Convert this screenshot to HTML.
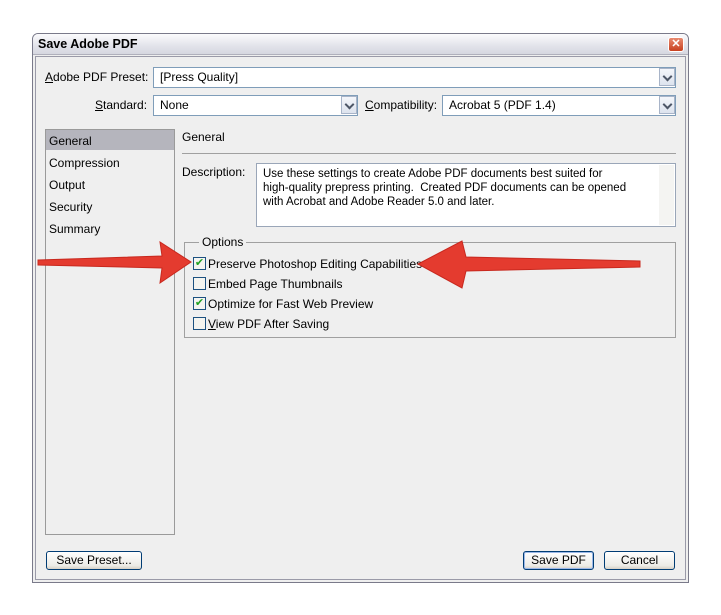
<!DOCTYPE html>
<html><head><style>
*{margin:0;padding:0;box-sizing:border-box}
body{width:721px;height:615px;background:#fff;position:relative;overflow:hidden;font-family:"Liberation Sans",sans-serif;font-size:12px;color:#000}
.a{position:absolute;white-space:nowrap}
.win{left:32px;top:33px;width:657px;height:550px;border:1px solid #7a7a8a;border-radius:6px 6px 0 0;background:#efefef}
.tb{left:33px;top:34px;width:655px;height:21px;border-radius:5px 5px 0 0;background:linear-gradient(#fbfbfd,#e2e3ea 60%,#d6d7e0);border-bottom:1px solid #b0b0bc}
.inner{left:35px;top:56px;width:651px;height:524px;border:1px solid #9a9aa8}
.box{background:#fff;border:1px solid #7f9db9}
.dd{width:16px;height:18px;border:1px solid #a8b4c8;background:linear-gradient(#f4f6fa,#dde3ee);}
.dd:after{content:"";position:absolute;left:4px;top:4px;width:5px;height:5px;border-right:2px solid #4d5666;border-bottom:2px solid #4d5666;transform:rotate(45deg)}
.cb{width:13px;height:13px;border:1px solid #1c5180;background:#f4f4f0}
.btn{height:19px;border:1px solid #003c74;border-radius:3px;background:linear-gradient(#fff,#ecebe6 80%,#d6d0c5);text-align:center;line-height:16px}
u{text-decoration:underline}
</style></head><body>
<div class="a win"></div>
<div class="a tb"></div>
<div class="a" style="left:38px;top:37px;font-weight:bold;font-size:12.5px">Save Adobe PDF</div>
<div class="a" style="left:668px;top:37px;width:16px;height:15px;border:1px solid #fff;border-radius:3px;background:linear-gradient(#e88a70,#c8401f);color:#fff;font-size:11px;font-weight:bold;text-align:center;line-height:13px">✕</div>
<div class="a inner"></div>

<div class="a" style="left:45px;top:70px"><u>A</u>dobe PDF Preset:</div>
<div class="a box" style="left:153px;top:67px;width:523px;height:21px;padding:2px 6px">[Press Quality]</div>
<div class="a dd" style="left:659px;top:68px"></div>

<div class="a" style="left:95px;top:98px"><u>S</u>tandard:</div>
<div class="a box" style="left:153px;top:95px;width:205px;height:21px;padding:2px 6px">None</div>
<div class="a dd" style="left:341px;top:96px"></div>
<div class="a" style="left:365px;top:98px"><u>C</u>ompatibility:</div>
<div class="a box" style="left:442px;top:95px;width:234px;height:21px;padding:2px 6px">Acrobat 5 (PDF 1.4)</div>
<div class="a dd" style="left:659px;top:96px"></div>

<div class="a" style="left:45px;top:129px;width:130px;height:406px;border:1px solid #9a9a9a;background:#efefef"></div>
<div class="a" style="left:46px;top:130px;width:128px;height:20px;background:#b5b5bd"></div>
<div class="a" style="left:49px;top:134px">General</div>
<div class="a" style="left:49px;top:156px">Compression</div>
<div class="a" style="left:49px;top:178px">Output</div>
<div class="a" style="left:49px;top:200px">Security</div>
<div class="a" style="left:49px;top:222px">Summary</div>

<div class="a" style="left:182px;top:130px">General</div>
<div class="a" style="left:182px;top:153px;width:494px;height:1px;background:#a0a0a0"></div>
<div class="a" style="left:182px;top:165px">Description:</div>
<div class="a box" style="left:256px;top:163px;width:420px;height:64px;border-color:#9aa6b8;padding:3px 6px;line-height:14px;font-size:11.5px">Use these settings to create Adobe PDF documents best suited for<br>high-quality prepress printing.&nbsp; Created PDF documents can be opened<br>with Acrobat and Adobe Reader 5.0 and later.</div>
<div class="a" style="left:659px;top:165px;width:15px;height:60px;background:#f4f4f2"></div>

<div class="a" style="left:184px;top:242px;width:492px;height:96px;border:1px solid #a0a0a0"></div>
<div class="a" style="left:199px;top:235px;background:#efefef;padding:0 3px">Options</div>
<div class="a cb" style="left:193px;top:257px;color:#21a121;font-size:11px;line-height:11px;text-align:center">✔</div>
<div class="a" style="left:208px;top:257px">Preserve Photoshop Editing Capabilities</div>
<div class="a cb" style="left:193px;top:277px"></div>
<div class="a" style="left:208px;top:277px">Embed Page Thumbnails</div>
<div class="a cb" style="left:193px;top:297px;color:#21a121;font-size:11px;line-height:11px;text-align:center">✔</div>
<div class="a" style="left:208px;top:297px">Optimize for Fast Web Preview</div>
<div class="a cb" style="left:193px;top:317px"></div>
<div class="a" style="left:208px;top:317px"><u>V</u>iew PDF After Saving</div>

<div class="a btn" style="left:46px;top:551px;width:96px">Save Preset...</div>
<div class="a btn" style="left:523px;top:551px;width:71px;box-shadow:inset 0 0 0 1px #9cb8e8">Save PDF</div>
<div class="a btn" style="left:604px;top:551px;width:71px">Cancel</div>

<svg class="a" style="left:0;top:0" width="721" height="615">
<g fill="#e43b2f" stroke="#c8281e" stroke-width="1">
<path d="M38 260 L162 256 L160 242 L191 262 L160 283 L162 268 L38 265 Z"/>
<path d="M640 261 L466 257 L462 241 L418 264 L462 288 L466 271 L640 267 Z"/>
</g>
</svg>
</body></html>
